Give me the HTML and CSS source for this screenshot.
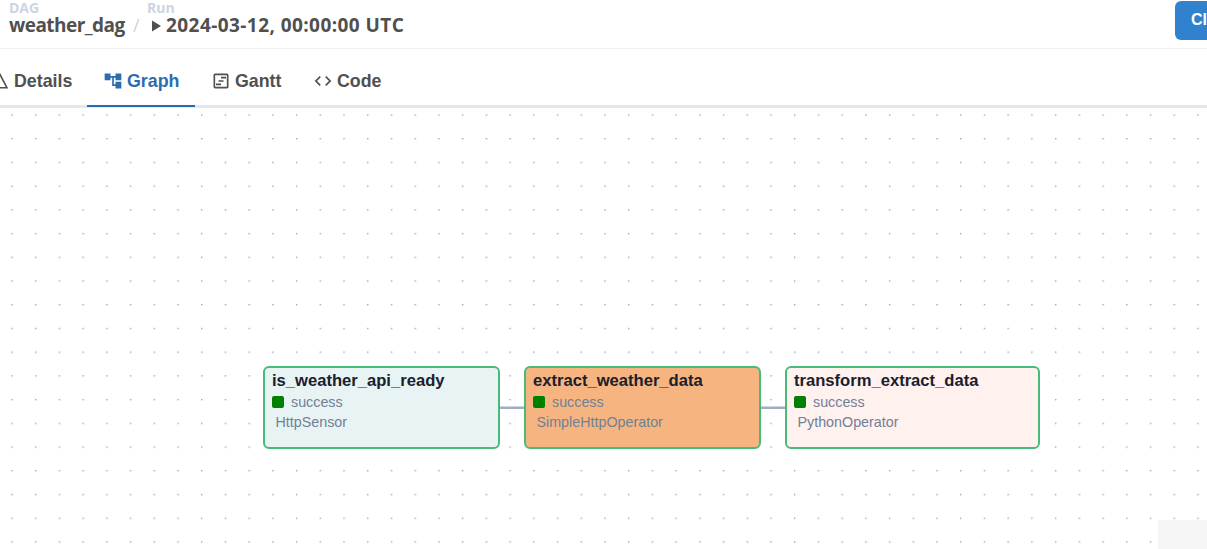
FILE: index.html
```html
<!DOCTYPE html>
<html lang="en">
<head>
<meta charset="utf-8">
<title>weather_dag</title>
<link rel="stylesheet" href="styles.css">
</head>
<body>
<header class="header">
  <nav class="crumbs">
    <div class="crumb crumb-dag"><span class="crumb-label">DAG</span><span class="crumb-value dag-name">weather_dag</span></div>
    <span class="slash">/</span>
    <div class="crumb"><span class="crumb-label">Run</span><span class="crumb-value run-value"><svg class="play" width="9" height="12" viewBox="0 0 9 12"><path d="M0 .5v11L9 6z" fill="currentColor"/></svg><span class="run-name">2024-03-12, 00:00:00 UTC</span></span></div>
  </nav>
  <button class="clear">Clear</button>
</header>
<nav class="tabs">
  <a class="tab tab-details"><svg class="icon" width="18" height="18" viewBox="0 0 24 24"><path d="M12 5.500 19.500 20H4.500L12 5.500M12 1 1 22h22L12 1z" fill="currentColor"/></svg><span>Details</span></a>
  <a class="tab tab-graph active"><svg class="icon" width="20" height="20" viewBox="0 0 24 24"><path d="M22 11V3h-7v3H9V3H2v8h7V8h2v10h4v3h7v-8h-7v3h-2V8h2v3z" fill="currentColor"/></svg><span>Graph</span></a>
  <a class="tab tab-gantt"><svg class="icon" width="20" height="20" viewBox="0 0 24 24"><path d="M19 5v14H5V5h14m0-2H5c-1.100 0-2 .9-2 2v14c0 1.100.9 2 2 2h14c1.100 0 2-.9 2-2V5c0-1.100-.9-2-2-2zM6 15h6v2H6zM12 7h6v2h-6zM9 11h6v2H9z" fill="currentColor"/></svg><span>Gantt</span></a>
  <a class="tab tab-code"><svg class="icon" width="20" height="20" viewBox="0 0 24 24"><path d="M9.400 16.600 4.800 12l4.600-4.600L8 6l-6 6 6 6 1.400-1.400zm5.200 0 4.600-4.600-4.600-4.600L16 6l6 6-6 6-1.400-1.400z" fill="currentColor"/></svg><span>Code</span></a>
</nav>
<main class="canvas">
  <svg class="grid" width="1207" height="441">
    <defs><pattern id="dots" x="11.250" y="6.300" width="23.720" height="23.720" patternUnits="userSpaceOnUse"><circle cx=".79" cy=".79" r=".68" fill="#81818a"/></pattern></defs>
    <rect width="1207" height="441" fill="url(#dots)"/>
    <path d="M499 299.700h26M760 299.700h26" stroke="#a0aec0" stroke-width="2.400"/>
  </svg>
  <section class="node sensor"><h2 class="title">is_weather_api_ready</h2><div class="status"><i class="swatch"></i>success</div><div class="operator">HttpSensor</div></section>
  <section class="node http"><h2 class="title">extract_weather_data</h2><div class="status"><i class="swatch"></i>success</div><div class="operator">SimpleHttpOperator</div></section>
  <section class="node python"><h2 class="title">transform_extract_data</h2><div class="status"><i class="swatch"></i>success</div><div class="operator">PythonOperator</div></section>
  <div class="minimap"></div>
</main>
</body>
</html>
```
FILE: styles.css
```css
* { box-sizing: border-box; }
body {
  margin: 0;
  width: 1207px;
  height: 549px;
  overflow: hidden;
  display: flex;
  flex-direction: column;
  background: #fff;
  color: #51504f;
  font-family: "Liberation Sans", Arial, sans-serif;
}
.header {
  height: 49px;
  flex: none;
  display: flex;
  justify-content: space-between;
  border-bottom: 1px solid #edf2f7;
}
.crumbs { display: flex; padding-left: 9px; font-family: "Open Sans", "Noto Sans", sans-serif; }
.crumb { display: flex; flex-direction: column; white-space: nowrap; }
.crumb-dag { width: 124px; }
.crumb-label { font-size: 14px; font-weight: 700; line-height: 15px; height: 14px; color: #cbd5e0; }
.crumb-value { font-size: 19px; font-weight: 700; line-height: 23px; height: 23px; }
.dag-name { letter-spacing: -0.540px; }
.run-name { letter-spacing: 0.430px; }
.slash { width: 14px; padding-top: 14px; font-size: 18px; line-height: 23px; color: #cbd5e0; }
.run-value { display: flex; align-items: center; padding-left: 5px; gap: 5px; }
.clear {
  width: 32px;
  height: 39px;
  margin: 1px 0 0;
  padding: 0 0 2px 16px;
  flex: none;
  overflow: hidden;
  border: 0;
  border-radius: 6px 0 0 6px;
  background: #3182ce;
  color: #fff;
  font: 700 16px "Liberation Sans", Arial, sans-serif;
  text-align: left;
}
.tabs { height: 59px; flex: none; display: flex; border-bottom: 3px solid #e2e8f0; }
.tab {
  height: 58px;
  display: flex;
  align-items: center;
  gap: 4px;
  padding-top: 8px;
  border-bottom: 2px solid transparent;
  font-size: 17.800px;
  font-weight: 700;
  white-space: nowrap;
}
.icon { flex: none; margin-top: -1px; }
.tab-details { width: 96px; margin-left: -9px; gap: 5px; }
.tab-graph { width: 108px; padding-left: 16px; }
.tab-gantt { width: 102px; padding-left: 16px; }
.tab-code { padding-left: 16px; }
.active { color: #2b6cb0; border-color: #2b6cb0; }
.canvas { position: relative; flex: 1; overflow: hidden; }
.grid { display: block; }
.node {
  position: absolute;
  top: 258px;
  width: 237px;
  height: 83px;
  padding: 4px 7px;
  border: 2px solid #48bb78;
  border-radius: 6px;
  color: #718096;
  font-size: 14.300px;
}
.sensor { left: 263px; background: #e8f3f4; }
.http { left: 524px; background: #f6b580; }
.python { left: 785px; width: 255px; background: #fff1ee; }
.title { margin: 0; font-size: 16.600px; font-weight: 700; line-height: 18px; color: #1a202c; white-space: nowrap; }
.status { display: flex; align-items: center; gap: 7px; height: 23px; padding-top: 1px; }
.swatch { width: 12px; height: 12px; border-radius: 2px; background: #008000; }
.operator { padding: 1px 0 0 3.500px; line-height: 17px; }
.minimap { position: absolute; right: 0; bottom: 0; width: 49px; height: 29px; background: #f5f5f5; }
```
